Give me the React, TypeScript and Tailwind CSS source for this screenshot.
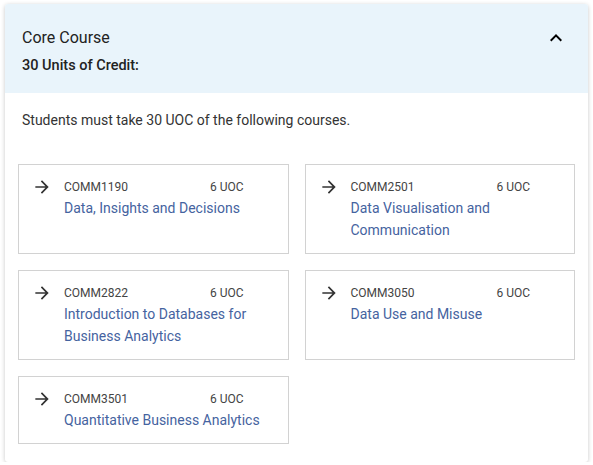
import React from 'react';

interface Course {
  code: string;
  title: string;
  uoc: number;
}

const courses: Course[] = [
  { code: 'COMM1190', title: 'Data, Insights and Decisions', uoc: 6 },
  { code: 'COMM2501', title: 'Data Visualisation and Communication', uoc: 6 },
  { code: 'COMM2822', title: 'Introduction to Databases for Business Analytics', uoc: 6 },
  { code: 'COMM3050', title: 'Data Use and Misuse', uoc: 6 },
  { code: 'COMM3501', title: 'Quantitative Business Analytics', uoc: 6 },
];

const ArrowIcon = () => (
  <svg width="20" height="20" viewBox="0 0 24 24" className="shrink-0 text-[#333]">
    <path fill="currentColor" d="M12 4l-1.41 1.41L16.17 11H4v2h12.17l-5.58 5.59L12 20l8-8z" />
  </svg>
);

const ChevronUp = () => (
  <svg width="24" height="24" viewBox="0 0 24 24" className="text-black">
    <path fill="currentColor" d="M12 8l-6 6 1.41 1.41L12 10.83l4.59 4.58L18 14z" />
  </svg>
);

const CourseCard: React.FC<{ course: Course }> = ({ course }) => (
  <div className="flex items-start gap-3 border border-[#d2d2d2] pl-[13px] pr-3 pt-3 pb-3">
    <ArrowIcon />
    <div className="min-w-0 flex-1">
      <div className="flex text-[12px] leading-5 text-[#444]">
        <span className="w-[146px]">{course.code}</span>
        <span>{course.uoc} UOC</span>
      </div>
      <p className="max-w-[210px] text-[14px] leading-[22px] text-[#4563a0]">{course.title}</p>
    </div>
  </div>
);

export default function App() {
  return (
    <div className="bg-white px-[5px] pt-[4px] font-['Roboto',sans-serif]">
      <div className="overflow-hidden rounded-[3px] bg-white shadow-[0_1px_4px_rgba(0,0,0,0.22)]">
        <div className="flex items-start justify-between bg-[#e9f4fb] pb-[17px] pl-[17px] pr-5 pt-[22px]">
          <div>
            <h2 className="text-[16px] leading-6 text-[#222]">Core Course</h2>
            <p className="mt-[6px] text-[14.5px] font-medium leading-5 text-[#222]">30 Units of Credit:</p>
          </div>
          <div className="pt-0">
            <ChevronUp />
          </div>
        </div>
        <div className="px-[13px] pb-[18px] pt-[17px]">
          <p className="px-1 text-[14px] leading-5 text-[#333]">
            Students must take 30 UOC of the following courses.
          </p>
          <div className="mt-[34px] grid grid-cols-2 gap-4">
            {courses.map((c) => (
              <CourseCard key={c.code} course={c} />
            ))}
          </div>
        </div>
      </div>
    </div>
  );
}
